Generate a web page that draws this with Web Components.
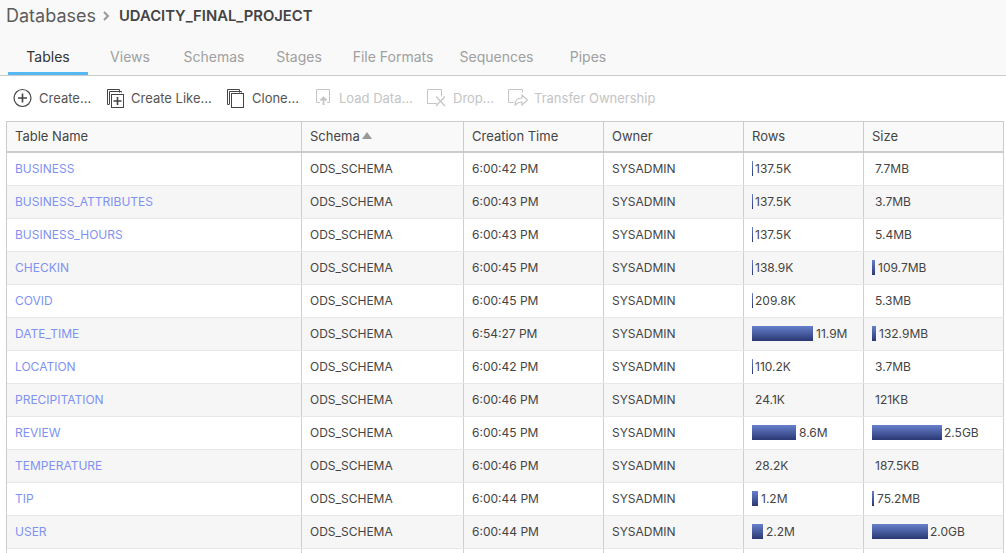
<!DOCTYPE html>
<html><head><meta charset="utf-8"><style>
html,body{margin:0;padding:0;height:553px;overflow:hidden;background:#fff;font-family:Inter,"Liberation Sans",sans-serif;color:#333}
</style></head><body>
<db-header></db-header>
<db-tabs></db-tabs>
<db-toolbar></db-toolbar>
<db-table></db-table>
<script>
const def=(n,css,html)=>customElements.define(n,class extends HTMLElement{connectedCallback(){if(this.shadowRoot)return;const s=this.attachShadow({mode:'open'});s.innerHTML=`<style>${css}</style>`+(typeof html==='function'?html(this):html);}});
def('db-header',`:host{display:flex;align-items:center;height:31px;background:#f9f9f9;padding-left:6px;color:#555}
.a{font-size:18px;color:#5c5c5c}.c{margin:0 9px 0 6px;display:flex}.b{font-size:14.800px;font-weight:600;color:#444}`,
`<span class="a">Databases</span><span class="c"><svg width="8" height="10" viewBox="0 0 8 10"><path d="M2 1l4 4-4 4" fill="none" stroke="#999" stroke-width="2"/></svg></span><span class="b">UDACITY_FINAL_PROJECT</span>`);
def('db-tabs',`:host{display:flex;height:45px;box-sizing:border-box;background:#f9f9f9;border-bottom:1px solid #ccc;padding-left:8px;font-size:14px;color:#a0a0a0}
span{display:flex;align-items:center;justify-content:center;height:44px;box-sizing:border-box;padding-top:6px}
.on{color:#333;border-bottom:3px solid #55b8f0;padding-top:9px}`,
()=>[['Tables',80,'on'],['Views',84],['Schemas',84],['Stages',86],['File Formats',102],['Sequences',105],['Pipes',78]].map(([t,w,c])=>`<span class="${c||''}" style="width:${w}px">${t}</span>`).join(''));
const icons={
plus:`<svg style="margin:0 6px 0 -1px" width="20" height="20" viewBox="0 1 20 20"><circle cx="9.500" cy="11" r="8.500" fill="none" stroke="#444" stroke-width="1.200"/><path d="M9.500 6.500v9M5 11h9" stroke="#444" stroke-width="1.600"/></svg>`,
like:`<svg style="margin:0 5px 0 -1px" width="20" height="20" viewBox="0 1 20 20" fill="none" stroke="#444"><path d="M3.500 17.500h-2v-15h12v3"/><path d="M3.500 17V4.500h12v1"/><rect x="5.500" y="7.500" width="12" height="13" fill="#fff"/><path d="M11.500 10v8M7.500 14h8" stroke-width="1.600"/></svg>`,
clone:`<svg style="margin:0 6px 0 -1px" width="20" height="20" viewBox="0 1 20 20" fill="none" stroke="#444"><path d="M3.500 17.500h-2v-15h12v3"/><path d="M3.500 17V4.500h12v1"/><rect x="5.500" y="6.500" width="12" height="14" fill="#fff"/></svg>`,
load:`<svg style="margin-right:4px" width="20" height="20" viewBox="0 1 20 20" fill="none" stroke="#c4c4c4"><path d="M5 15.500H1.500v-13h13v13H12"/><path d="M8.500 18v-7M5.500 13.500l3-3 3 3" stroke-width="1.800"/></svg>`,
drop:`<svg style="margin:0 3px 0 -1px" width="24" height="20" viewBox="0 1 24 20" fill="none" stroke="#c4c4c4"><path d="M11 16.500H1.500v-14h14v7"/><path d="M10 9.500l9 9.500M19 9.500l-9 9.500" stroke-width="1.200"/></svg>`,
transfer:`<svg style="margin-right:5px" width="22" height="20" viewBox="0 1 22 20" fill="none" stroke="#c4c4c4"><path d="M6.500 15.500h-5v-13h14v3"/><path d="M8 18c0-5 3-7 7-7V8l5.500 5-5.500 5v-3c-3 0-5 1-7 3z" stroke-width="1.100"/></svg>`};
def('db-toolbar',`:host{display:flex;align-items:center;height:45px;box-sizing:border-box;font-size:13px;color:#555;padding:0 0 2px 14px}
span{display:flex;align-items:center;white-space:nowrap}svg{flex:none}.d{color:#c4c4c4}`,
()=>[['Create...','plus',93,0],['Create Like...','like',120,0],['Clone...','clone',88,0],['Load Data...','load',112,1],['Drop...','drop',80,1],['Transfer Ownership','transfer',160,1]].map(([t,i,w,d])=>`<span class="${d?'d':''}" style="width:${w}px">${icons[i]}${t}</span>`).join(''));
const rows=[['BUSINESS','6:00:42 PM','137.5K',1,'7.7MB',0],['BUSINESS_ATTRIBUTES','6:00:43 PM','137.5K',1,'3.7MB',0],['BUSINESS_HOURS','6:00:43 PM','137.5K',1,'5.4MB',0],['CHECKIN','6:00:45 PM','138.9K',1,'109.7MB',3],['COVID','6:00:45 PM','209.8K',1,'5.3MB',0],['DATE_TIME','6:54:27 PM','11.9M',61,'132.9MB',4],['LOCATION','6:00:42 PM','110.2K',1,'3.7MB',0],['PRECIPITATION','6:00:46 PM','24.1K',0,'121KB',0],['REVIEW','6:00:45 PM','8.6M',44,'2.5GB',70],['TEMPERATURE','6:00:46 PM','28.2K',0,'187.5KB',0],['TIP','6:00:44 PM','1.2M',6,'75.2MB',2],['USER','6:00:44 PM','2.2M',11,'2.0GB',56],['','','',0,'',0]];
def('db-bar',`:host{display:flex;align-items:center}i{display:block;height:15px;background:linear-gradient(#6680cc,#2a3873);margin-right:3px}i.thin{margin-right:2px}`,
h=>{const w=+h.getAttribute('w');return `<i class="${w===1||w>=56&&w!==61?'thin':''}" style="width:${w}px"></i><slot></slot>`});
const cols='295px 162px 140px 140px 120px 140px';
def('db-table',`:host{display:block;margin-left:6px;width:998px;height:432px;overflow:hidden;box-sizing:border-box;border:solid #ccc;border-width:1px 0 0 1px;font-size:12px;color:#444}
.r{display:grid;grid-template-columns:${cols};height:33px;box-sizing:border-box;border-bottom:1px solid #e6e6e6}
.r>div{display:flex;align-items:center;padding:0 0 2px 8px;border-right:1px solid #cfcfcf;min-width:0;white-space:nowrap;box-sizing:border-box}
.h{height:31px;background:#f9f9f9;border-bottom:2px solid #ccc;font-size:13px;color:#444}.h>div{border-right-color:#ccc}
.r.alt{background:#f6f6f6}a{color:#7f92f2}
.s{margin-left:2px;border:solid transparent;border-width:0 5px 7px;border-bottom-color:#999;width:0;height:0;display:inline-block}`,
()=>`<div class="r h"><div>Table Name</div><div>Schema<span class="s"></span></div><div>Creation Time</div><div>Owner</div><div>Rows</div><div>Size</div></div>`+
rows.map((r,i)=>`<div class="r ${i%2?'alt':''}"><div>${r[0]?`<a>${r[0]}</a>`:''}</div><div>${r[0]?'ODS_SCHEMA':''}</div><div>${r[1]}</div><div>${r[0]?'SYSADMIN':''}</div><div>${r[0]?`<db-bar w="${r[3]}">${r[2]}</db-bar>`:''}</div><div>${r[0]?`<db-bar w="${r[5]}">${r[4]}</db-bar>`:''}</div></div>`).join(''));
</script>
</body></html>
